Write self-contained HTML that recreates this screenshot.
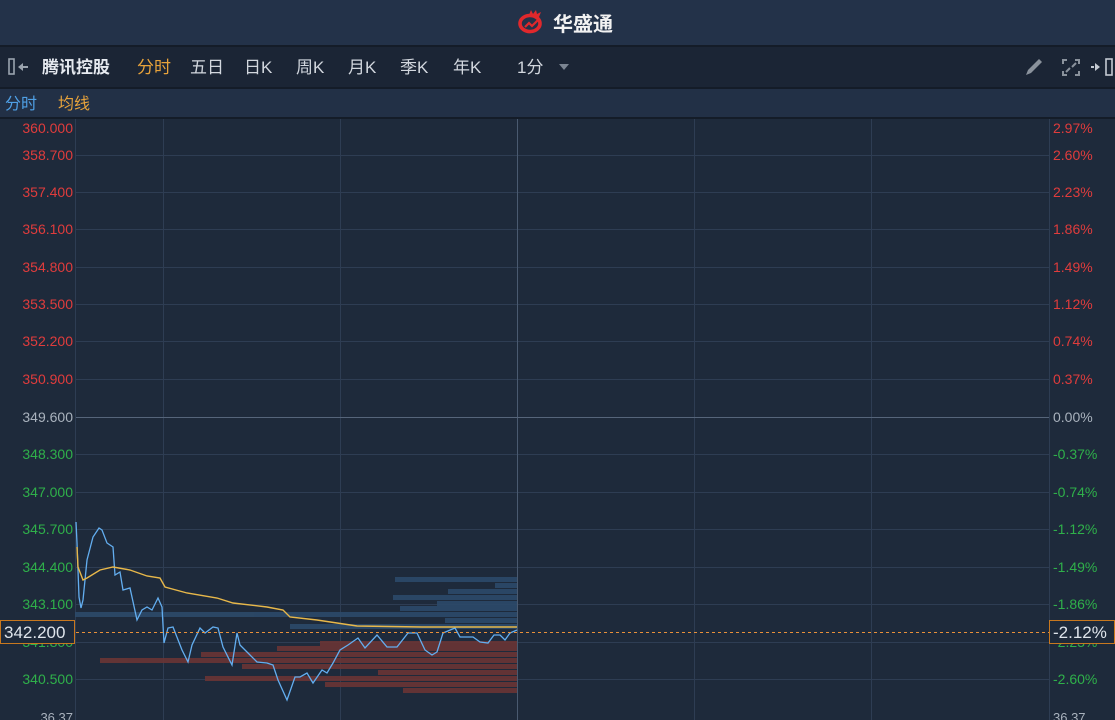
<!DOCTYPE html>
<html><head><meta charset="utf-8"><style>
body{margin:0;width:1115px;height:720px;overflow:hidden;background:#1e2a3b;font-family:"Liberation Sans","Noto Sans CJK SC",sans-serif}
svg{display:block}
</style></head><body>
<svg width="1115" height="720" xmlns="http://www.w3.org/2000/svg" font-family="Liberation Sans, Noto Sans CJK SC, sans-serif">
<rect x="0" y="0" width="1115" height="45" fill="#233249"/>
<rect x="0" y="45" width="1115" height="2" fill="#141c28"/>
<rect x="0" y="47" width="1115" height="40" fill="#1b2535"/>
<rect x="0" y="87" width="1115" height="2" fill="#141c28"/>
<rect x="0" y="89" width="1115" height="28" fill="#223046"/>
<rect x="0" y="117" width="1115" height="2" fill="#141c28"/>
<rect x="0" y="119" width="1115" height="601" fill="#1e2a3b"/>
<!-- logo -->
<g transform="translate(517,9)">
<path d="M3 15 a10 8 0 1 0 20 -1 a10 8 0 1 0 -20 1z" fill="none" stroke="#e0282c" stroke-width="3.6"/>
<path d="M8 18 l4 -4 l3 3 l6 -6" fill="none" stroke="#e0282c" stroke-width="2.2"/>
<path d="M12 6 l2 -5 l2 4 l3 -4 l1 4 l4 -2 l-2 5z" fill="#e0282c"/>
</g>
<text x="553" y="31" font-size="20" font-weight="bold" fill="#f2f2f2">华盛通</text>
<!-- toolbar -->
<rect x="9" y="59" width="5" height="15" fill="none" stroke="#9aa3ae" stroke-width="1.6"/>
<path d="M18 67 l5 -4 v8z M22 66 h6 v2 h-6z" fill="#9aa3ae"/>
<text x="42" y="73" font-size="17" font-weight="bold" fill="#e6eaf0">腾讯控股</text>
<text x="137" y="73" font-size="17" fill="#e8a33b">分时</text>
<g font-size="17" fill="#d2d7de">
<text x="190" y="73">五日</text><text x="244" y="73">日K</text><text x="296" y="73">周K</text><text x="348" y="73">月K</text><text x="400" y="73">季K</text><text x="453" y="73">年K</text><text x="517" y="73">1分</text>
</g>
<path d="M559 64 h10 l-5 6z" fill="#7b8592"/>
<path d="M1026 75 l2 -5 l11 -11 l3 3 l-11 11z" fill="#8a929c"/>
<g stroke="#8a929c" stroke-width="2" fill="none"><path d="M1063 64 v-4 h4 M1075 60 h4 v4 M1079 71 v4 h-4 M1067 75 h-4 v-4 M1066 72 l4 -4 M1076 63 l-4 4"/></g>
<path d="M1100 67 l-5 -4 v8z M1094 66 h-3 v2 h3z" fill="#c4cad2"/>
<rect x="1106" y="59" width="6" height="16" fill="none" stroke="#c4cad2" stroke-width="1.6"/>
<text x="5" y="109" font-size="16" fill="#4fa0e6">分时</text>
<text x="58" y="109" font-size="16" fill="#e8a33b">均线</text>
<!-- grid -->
<g stroke="#2e3d53" stroke-width="1">
<line x1="75.5" y1="119" x2="75.5" y2="720"/><line x1="1049.5" y1="119" x2="1049.5" y2="720"/>
<line x1="163.5" y1="119" x2="163.5" y2="720"/><line x1="340.5" y1="119" x2="340.5" y2="720"/>
<line x1="694.5" y1="119" x2="694.5" y2="720"/><line x1="871.5" y1="119" x2="871.5" y2="720"/>
<line x1="76" y1="155.5" x2="1049" y2="155.5"/><line x1="76" y1="192.5" x2="1049" y2="192.5"/><line x1="76" y1="229.5" x2="1049" y2="229.5"/><line x1="76" y1="267.5" x2="1049" y2="267.5"/><line x1="76" y1="304.5" x2="1049" y2="304.5"/><line x1="76" y1="341.5" x2="1049" y2="341.5"/><line x1="76" y1="379.5" x2="1049" y2="379.5"/>
<line x1="76" y1="454.5" x2="1049" y2="454.5"/><line x1="76" y1="492.5" x2="1049" y2="492.5"/><line x1="76" y1="529.5" x2="1049" y2="529.5"/><line x1="76" y1="567.5" x2="1049" y2="567.5"/><line x1="76" y1="604.5" x2="1049" y2="604.5"/><line x1="76" y1="642.5" x2="1049" y2="642.5"/><line x1="76" y1="679.5" x2="1049" y2="679.5"/>
</g>
<line x1="517.5" y1="119" x2="517.5" y2="720" stroke="#4a5a70"/>
<line x1="76" y1="417.5" x2="1049" y2="417.5" stroke="#56657a"/>
<!-- labels -->
<g font-size="14" text-anchor="end">
<g fill="#e03c3c"><text x="73" y="133">360.000</text><text x="73" y="160">358.700</text><text x="73" y="197">357.400</text><text x="73" y="234">356.100</text><text x="73" y="272">354.800</text><text x="73" y="309">353.500</text><text x="73" y="346">352.200</text><text x="73" y="384">350.900</text></g>
<text x="73" y="422" fill="#a9b2bd">349.600</text>
<g fill="#2fb04a"><text x="73" y="459">348.300</text><text x="73" y="497">347.000</text><text x="73" y="534">345.700</text><text x="73" y="572">344.400</text><text x="73" y="609">343.100</text><text x="73" y="647">341.800</text><text x="73" y="684">340.500</text></g>
</g>
<g font-size="14">
<g fill="#e03c3c"><text x="1053" y="133">2.97%</text><text x="1053" y="160">2.60%</text><text x="1053" y="197">2.23%</text><text x="1053" y="234">1.86%</text><text x="1053" y="272">1.49%</text><text x="1053" y="309">1.12%</text><text x="1053" y="346">0.74%</text><text x="1053" y="384">0.37%</text></g>
<text x="1053" y="422" fill="#a9b2bd">0.00%</text>
<g fill="#2fb04a"><text x="1053" y="459">-0.37%</text><text x="1053" y="497">-0.74%</text><text x="1053" y="534">-1.12%</text><text x="1053" y="572">-1.49%</text><text x="1053" y="609">-1.86%</text><text x="1053" y="647">-2.23%</text><text x="1053" y="684">-2.60%</text></g>
</g>
<text x="73" y="722" font-size="13" fill="#a9b2bd" text-anchor="end">36.37</text>
<text x="1053" y="722" font-size="13" fill="#a9b2bd">36.37</text>
<!-- volume profile -->
<g fill="#2c4a6a" opacity="0.9">
<rect x="395" y="577" width="122" height="5"/><rect x="495" y="583" width="22" height="5"/><rect x="448" y="589" width="69" height="5"/><rect x="393" y="595" width="124" height="5"/><rect x="437" y="601" width="80" height="5"/><rect x="400" y="606" width="117" height="5"/><rect x="75" y="612" width="442" height="5"/><rect x="445" y="618" width="72" height="5"/><rect x="290" y="624" width="227" height="5"/>
</g>
<g fill="#6a3535" opacity="0.9">
<rect x="320" y="641" width="197" height="5"/><rect x="277" y="646" width="240" height="5"/><rect x="201" y="652" width="316" height="5"/><rect x="100" y="658" width="417" height="5"/><rect x="242" y="664" width="275" height="5"/><rect x="378" y="670" width="139" height="5"/><rect x="205" y="676" width="312" height="5"/><rect x="325" y="682" width="192" height="5"/><rect x="403" y="688" width="114" height="5"/>
</g>
<!-- price line -->
<polyline fill="none" stroke="#63aef0" stroke-width="1.3" points="76,522 77,543 79,597 81,608 83,600 87,560 93,537 99,528 102,530 107,543 113,547 115,575 120,572 123,590 130,588 137,620 142,610 147,607 152,610 158,598 162,607 164,643 168,628 173,627 182,650 188,662 192,645 200,628 205,633 213,627 218,628 223,647 232,665 237,633 240,645 248,653 257,662 267,663 273,665 278,680 287,700 295,677 300,677 307,673 313,683 322,670 327,673 333,663 340,650 348,645 358,638 365,648 377,635 387,647 397,647 408,633 417,633 425,650 432,655 437,652 443,633 455,628 460,637 473,637 480,642 488,643 494,635 500,635 505,640 510,633 517,630"/>
<polyline fill="none" stroke="#e8b84a" stroke-width="1.4" points="77,547 78,567 83,580 87,578 100,570 113,567 130,570 147,576 160,578 165,587 187,593 217,598 233,603 267,607 283,610 290,617 317,620 357,626 422,627 517,627"/>
<line x1="76" y1="632.5" x2="1049" y2="632.5" stroke="#e8903a" stroke-dasharray="3,3"/>
<rect x="0.5" y="620.5" width="74" height="23" fill="#1e2a3b" stroke="#c8781f"/>
<text x="4" y="638" font-size="17" fill="#dfe5ec">342.200</text>
<rect x="1049.5" y="620.5" width="65" height="23" fill="#1e2a3b" stroke="#c8781f"/>
<text x="1053" y="638" font-size="17" fill="#dfe5ec">-2.12%</text>
</svg>
</body></html>
